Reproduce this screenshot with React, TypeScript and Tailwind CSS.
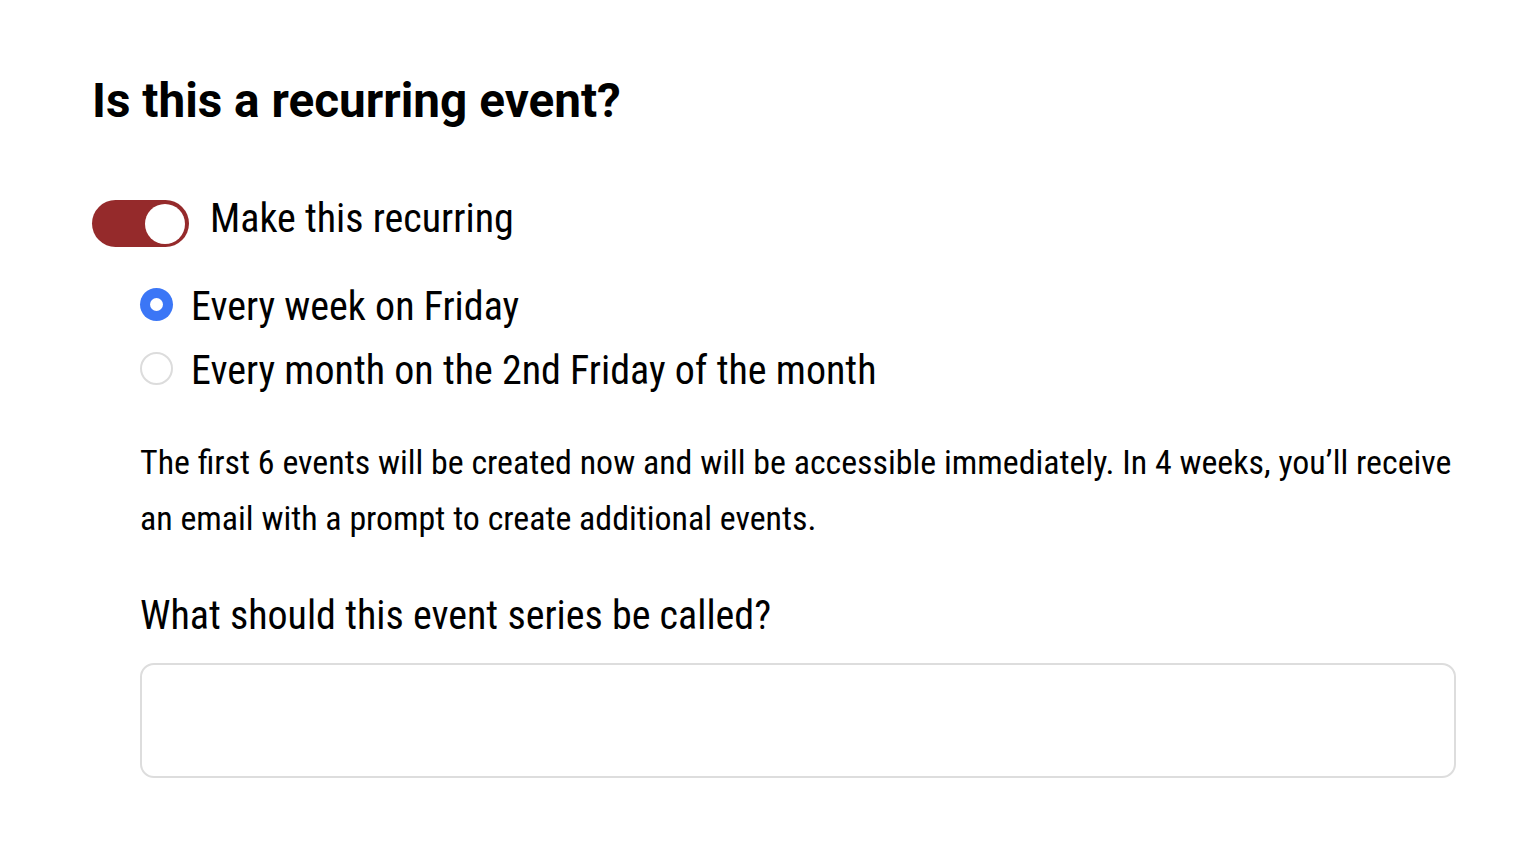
import { useState } from 'react'

const condensed = { fontFamily: '"Roboto Condensed", Roboto, "Liberation Sans", sans-serif' }

function Toggle({ on, onChange }: { on: boolean; onChange: (v: boolean) => void }) {
  return (
    <button
      type="button"
      onClick={() => onChange(!on)}
      className={`flex h-[47px] w-[97px] shrink-0 items-center rounded-full px-[4px] ${
        on ? 'justify-end bg-[#952a2b]' : 'justify-start bg-gray-300'
      }`}
    >
      <span className="block h-[40px] w-[40px] rounded-full bg-white" />
    </button>
  )
}

function Radio({ checked, label, onSelect }: { checked: boolean; label: string; onSelect: () => void }) {
  return (
    <label className="flex h-[64px] cursor-pointer items-center gap-[18px]" onClick={onSelect}>
      {checked ? (
        <span className="flex h-[33px] w-[33px] shrink-0 items-center justify-center rounded-full bg-[#3b76f6]">
          <span className="block h-[13px] w-[13px] rounded-full bg-white" />
        </span>
      ) : (
        <span className="block h-[33px] w-[33px] shrink-0 rounded-full border-2 border-[#dcdcdc] bg-white" />
      )}
      <span className="mt-[6px] text-[40px] font-stretch-condensed leading-none text-black" style={condensed}>
        {label}
      </span>
    </label>
  )
}

export default function App() {
  const [recurring, setRecurring] = useState(true)
  const [freq, setFreq] = useState<'week' | 'month'>('week')
  const [name, setName] = useState('')

  return (
    <div className="min-h-screen bg-white pl-[92px] pr-[80px] pt-[73px] text-black">
      <h1 className="text-[47.7px] font-bold leading-[1.2]" style={{ fontFamily: 'Roboto, "Liberation Sans", sans-serif' }}>
        Is this a recurring event?
      </h1>

      <div className="mt-[70px] flex items-center gap-[21px]">
        <Toggle on={recurring} onChange={setRecurring} />
        <span className="-mt-[10px] text-[40px] font-stretch-condensed leading-none" style={condensed}>
          Make this recurring
        </span>
      </div>

      <div className="pl-[48px]">
        <div className="mt-[25px] flex flex-col">
          <Radio checked={freq === 'week'} label="Every week on Friday" onSelect={() => setFreq('week')} />
          <Radio
            checked={freq === 'month'}
            label="Every month on the 2nd Friday of the month"
            onSelect={() => setFreq('month')}
          />
        </div>

        <p className="mt-[35px] text-[33.9px] font-stretch-condensed leading-[56px]" style={condensed}>
          The first 6 events will be created now and will be accessible immediately. In 4 weeks, you’ll receive an
          email with a prompt to create additional events.
        </p>

        <h2 className="mt-[49px] text-[40px] font-stretch-condensed leading-none" style={condensed}>
          What should this event series be called?
        </h2>

        <input
          value={name}
          onChange={(e) => setName(e.target.value)}
          className="mt-[27px] block h-[115px] w-full rounded-[14px] border-2 border-[#dddddd] px-5 text-[32px] outline-none"
          style={condensed}
        />
      </div>
    </div>
  )
}
